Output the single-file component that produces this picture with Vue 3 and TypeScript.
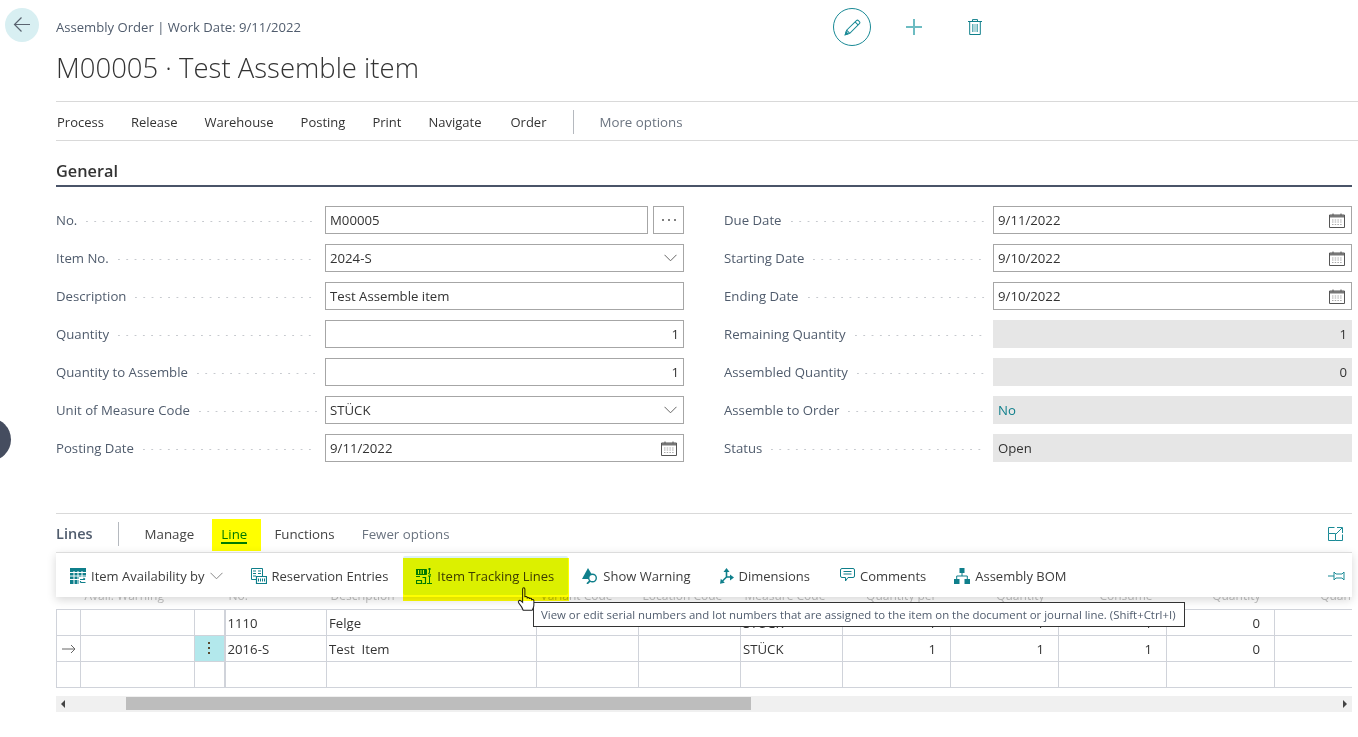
<script setup lang="ts">
type Field = { label: string; value: string; kind?: 'num' | 'select' | 'date' | 'lookup'; readonly?: boolean; link?: boolean }

const leftFields: Field[] = [
  { label: 'No.', value: 'M00005', kind: 'lookup' },
  { label: 'Item No.', value: '2024-S', kind: 'select' },
  { label: 'Description', value: 'Test Assemble item' },
  { label: 'Quantity', value: '1', kind: 'num' },
  { label: 'Quantity to Assemble', value: '1', kind: 'num' },
  { label: 'Unit of Measure Code', value: 'STÜCK', kind: 'select' },
  { label: 'Posting Date', value: '9/11/2022', kind: 'date' },
]

const rightFields: Field[] = [
  { label: 'Due Date', value: '9/11/2022', kind: 'date' },
  { label: 'Starting Date', value: '9/10/2022', kind: 'date' },
  { label: 'Ending Date', value: '9/10/2022', kind: 'date' },
  { label: 'Remaining Quantity', value: '1', kind: 'num', readonly: true },
  { label: 'Assembled Quantity', value: '0', kind: 'num', readonly: true },
  { label: 'Assemble to Order', value: 'No', readonly: true, link: true },
  { label: 'Status', value: 'Open', readonly: true },
]

const menu = ['Process', 'Release', 'Warehouse', 'Posting', 'Print', 'Navigate', 'Order']

const colWidths = [24, 114, 30, 102, 210, 102, 102, 102, 108, 108, 108, 108, 108]
const headers = ['', 'Avail. Warning', '', 'No.', 'Description', 'Variant Code', 'Location Code', 'Measure Code', 'Quantity per', 'Quantity', 'Consume', 'Quantity', 'Quantity']
const rows = [
  ['', '', '', '1110', 'Felge', '', '', 'STÜCK', '1', '1', '1', '0', ''],
  ['>', '', ':', '2016-S', 'Test  Item', '', '', 'STÜCK', '1', '1', '1', '0', ''],
  ['', '', '', '', '', '', '', '', '', '', '', '', ''],
]

function isNumCol(i: number): boolean {
  return i >= 8
}
</script>

<template>
  <div class="page">
    <!-- page header -->
    <header class="head">
      <button class="back" aria-label="Back">
        <svg width="20" height="20" viewBox="0 0 20 20" fill="none" stroke="#5a6470" stroke-width="1.2">
          <path d="M18 9.500H2.500M9.500 2.500l-7 7 7 7" />
        </svg>
      </button>
      <div class="head-text">
        <div class="caption">Assembly Order | Work Date: 9/11/2022</div>
        <h1 class="title">M00005 · Test Assemble item</h1>
      </div>
      <div class="head-actions">
        <span class="edit-btn">
          <svg width="17" height="17" viewBox="0 0 20 20" fill="none" stroke="#1a8a96" stroke-width="1.2">
            <path d="M1.500 18.500l1.600-5.300L14.600 1.900a1.700 1.700 0 0 1 2.400 0l1.100 1.100a1.700 1.700 0 0 1 0 2.400L6.800 16.900z" />
            <path d="M3.100 13.200l3.700 3.700M13 3.500l3.500 3.500" />
            <path d="M1.500 18.500l1-3.200 2.200 2.200z" fill="#1a8a96" />
          </svg>
        </span>
        <svg class="plus" width="16" height="16" viewBox="0 0 16 16" stroke="#6dbcc2" stroke-width="2">
          <path d="M8 0v16M0 8h16" />
        </svg>
        <svg class="trash" width="14" height="16" viewBox="0 0 14 16" fill="none" stroke="#0f7f8b" stroke-width="1">
          <path d="M0 2.500h14M4.500 2.500V.6h5v1.900M1.700 2.500v13h10.600v-13" />
          <path d="M4.500 5v8M6 5v8M8 5v8M9.500 5v8" stroke="#5fafb6" />
        </svg>
      </div>
    </header>

    <nav class="menu">
      <span v-for="m in menu" :key="m" class="menu-item">{{ m }}</span>
      <span class="menu-sep"></span>
      <span class="menu-more">More options</span>
    </nav>

    <section class="general">
      <h2 class="section-title">General</h2>
      <div class="form">
        <div v-for="(col, c) in [leftFields, rightFields]" :key="c" class="form-col">
          <div v-for="f in col" :key="f.label" class="field">
            <label class="label"><span>{{ f.label }}</span><i class="dots"></i></label>
            <div class="control-wrap">
              <div
                class="control"
                :class="{ readonly: f.readonly, num: f.kind === 'num', link: f.link }"
              >
                <span class="value">{{ f.value }}</span>
                <svg v-if="f.kind === 'select'" width="13" height="8" viewBox="0 0 13 8" fill="none" stroke="#666" stroke-width="1">
                  <path d="M.5.800l6 6 6-6" />
                </svg>
                <svg v-if="f.kind === 'date'" class="cal" width="16" height="15" viewBox="0 0 16 15" fill="none">
                  <path d="M.5 2h15v12.500H.5z" stroke="#555" />
                  <path d="M1 2h14v2.500H1z" fill="#777" />
                  <path d="M4 .5v2M12 .5v2" stroke="#555" />
                  <path d="M3 7h10M3 9h10M3 11.500h10" stroke="#aaa" stroke-dasharray="1.500 1.200" />
                </svg>
              </div>
              <div v-if="f.kind === 'lookup'" class="lookup">
                <i></i><i></i><i></i>
              </div>
            </div>
          </div>
        </div>
      </div>
    </section>

    <section class="lines">
      <div class="lines-tabs">
        <span class="lines-title">Lines</span>
        <span class="lines-sep"></span>
        <span class="tab">Manage</span>
        <span class="tab tab-active">Line</span>
        <span class="tab">Functions</span>
        <span class="tab tab-muted">Fewer options</span>
        <svg class="expand" width="15" height="14" viewBox="0 0 15 14" fill="none" stroke="#1a8a96">
          <path d="M.5 6.500h7v7h-7zM7.500 13.500h7v-6M6.500 .5H.5v6M9 .5h5.500v5.500M14 1L8 7" />
        </svg>
      </div>

      <div class="toolbar">
        <button class="tool">
          <svg width="16" height="16" viewBox="0 0 16 16">
            <path d="M0 0h16v13h-3v3H0z" fill="#0f7f8b" />
            <path d="M0 4.500h16M0 8h16M0 11.500h9M4 3v13M8 3v13M12 3v6" stroke="#fff" />
            <path d="M9 9h7v7H9z" fill="#fff" />
            <path d="M10 11.500h5M13.500 10l1.500 1.500M10.500 14.500h5M10.500 14.500V13" fill="none" stroke="#0f7f8b" stroke-width="1.200" />
          </svg>
          <span>Item Availability by</span>
          <svg class="chev" width="13" height="8" viewBox="0 0 13 8" fill="none" stroke="#888">
            <path d="M.5.800l6 6 6-6" />
          </svg>
        </button>
        <button class="tool">
          <svg width="16" height="16" viewBox="0 0 16 16" fill="none" stroke="#0f7f8b">
            <path d="M.5.500h11v11H.5z" />
            <path d="M2 3h3M7 3h3M2 5.500h3M7 5.500h3M2 8h3" />
            <path d="M5.500 8.500h10v7h-10z" fill="#fff" stroke-width="1.200" />
            <path d="M7.500 10.500v3M9.500 10.500v3M11.500 10.500v3M13.500 10.500v3" />
          </svg>
          <span>Reservation Entries</span>
        </button>
        <button class="tool tool-tracking">
          <svg width="16" height="16" viewBox="0 0 16 16" fill="none" stroke="#007a1e">
            <path d="M0 1.500h10.500v5H0z" fill="#007a1e" />
            <path d="M2.500 2v4M5 2v4M7.500 2v4" stroke="#dcf000" />
            <path d="M12 1h3M13.500 0v5M12 5l3 2M12 8h3M13.500 8v7M11 15.500h5" />
            <path d="M0 8.500h4M.5 12.500h5v3H.5zM6.500 9.500h3v6h-3" stroke-width="1.200" />
          </svg>
          <span>Item Tracking Lines</span>
        </button>
        <button class="tool">
          <svg width="16" height="16" viewBox="0 0 16 16">
            <path d="M6 0l6.500 11H0z" fill="#0f7f8b" />
            <circle cx="10.500" cy="10" r="3.800" fill="#fff" stroke="#0f7f8b" stroke-width="1.400" />
            <path d="M8 12.800L5 15.800" stroke="#0f7f8b" stroke-width="1.800" />
          </svg>
          <span>Show Warning</span>
        </button>
        <button class="tool">
          <svg width="14" height="16" viewBox="0 0 14 16" fill="none" stroke="#0f7f8b" stroke-width="1.600">
            <path d="M6.500 9V3M6.500 9l-4 4M6.500 9H11" />
            <path d="M6.500 0L3.500 4h6zM14 9.500l-4-3v6zM0 15.800l.8-5 4 4z" fill="#0f7f8b" stroke="none" />
          </svg>
          <span>Dimensions</span>
        </button>
        <button class="tool">
          <svg width="15" height="15" viewBox="0 0 15 15" fill="none" stroke="#0f7f8b">
            <path d="M2 .5h11a1.500 1.500 0 0 1 1.500 1.500v6A1.500 1.500 0 0 1 13 9.500H8l-2.500 3.500V9.500H2A1.500 1.500 0 0 1 .5 8V2A1.500 1.500 0 0 1 2 .5z" />
            <path d="M3.500 3.500h8M3.500 6h8" />
          </svg>
          <span>Comments</span>
        </button>
        <button class="tool">
          <svg width="16" height="16" viewBox="0 0 16 16" fill="#0f7f8b">
            <path d="M5.500 0h5v5h-5zM0 11h5.500v5H0zM10.500 11H16v5h-5.500z" />
            <path d="M8 5v3M2.700 11V8h10.600v3" fill="none" stroke="#0f7f8b" />
          </svg>
          <span>Assembly BOM</span>
        </button>
        <svg class="pin" width="17" height="12" viewBox="0 0 17 12" fill="none" stroke="#1a8a96">
          <path d="M0 6h6M6 2v8l2-2h6l2 2V2l-2 2H8z" />
        </svg>
      </div>

      <div class="grid-wrap">
        <table class="grid">
          <colgroup>
            <col v-for="(w, i) in colWidths" :key="i" :style="{ width: w + 'px' }" />
          </colgroup>
          <thead>
            <tr>
              <th v-for="(h, i) in headers" :key="i" :class="{ right: isNumCol(i) }">{{ h }}</th>
            </tr>
          </thead>
          <tbody>
            <tr v-for="(row, r) in rows" :key="r">
              <td
                v-for="(cell, i) in row"
                :key="i"
                :class="{ right: isNumCol(i), 'kebab-cell': cell === ':', thick: i === 3 }"
              >
                <svg v-if="cell === '>'" class="row-arrow" width="14" height="10" viewBox="0 0 14 10" fill="none" stroke="#666">
                  <path d="M0 5h13M9 1l4 4-4 4" />
                </svg>
                <span v-else-if="cell === ':'" class="kebab"><i></i><i></i><i></i></span>
                <template v-else>{{ cell }}</template>
              </td>
            </tr>
          </tbody>
        </table>
      </div>

      <div class="scrollbar">
        <span class="sb-arrow left"></span>
        <span class="sb-thumb"></span>
        <span class="sb-arrow right"></span>
      </div>

      <!-- hover state and marker highlights sitting on top of the page -->
      <div class="tooltip">View or edit serial numbers and lot numbers that are assigned to the item on the document or journal line. (Shift+Ctrl+I)</div>
      <svg class="hand" width="18" height="24" viewBox="0 0 16 21" fill="#fff" stroke="#222" stroke-width="0.900">
        <path d="M5 1.500c0-1.300 2-1.300 2 0V9c0-1 2-1 2 0v1c0-1 2-1 2 0v.5c0-1 2-1 2 0v1c0-.8 2-.8 2 .3V16c0 2-1 3-1.500 4.500h-8C5 19 3.500 16.500 1.500 14c-1-1.500.5-3 2-1.800L5 13.500z" />
      </svg>
      <span class="mark mark-line"></span>
      <span class="mark mark-tracking"></span>
    </section>

    <span class="side-handle"></span>
  </div>
</template>

<style scoped>
.page {
  position: relative;
  width: 1358px;
  height: 737px;
  overflow: hidden;
  background: #fff;
  font-family: 'Open Sans', 'Noto Sans', sans-serif;
  font-size: 13.2px;
  color: #333;
}

.head {
  display: flex;
  height: 101px;
  padding-left: 5px;
  box-sizing: border-box;
}

.back {
  width: 34px;
  height: 34px;
  margin-top: 8px;
  border: 0;
  padding: 0;
  border-radius: 50%;
  background: #d8eff2;
  display: flex;
  align-items: center;
  justify-content: center;
}

.head-text {
  width: 777px;
  margin-left: 17px;
}

.caption {
  margin-top: 18px;
  line-height: 18px;
  font-size: 13.1px;
  color: #505c6d;
}

.title {
  margin: 9px 0 0;
  font-size: 27.5px;
  line-height: 46px;
  font-weight: 300;
  color: #333;
}

.head-actions {
  display: flex;
  align-items: center;
  height: 38px;
  margin-top: 8px;
}

.edit-btn {
  width: 36px;
  height: 36px;
  border: 1px solid #1a8a96;
  border-radius: 50%;
  display: flex;
  align-items: center;
  justify-content: center;
}

.plus {
  margin-left: 35px;
}

.trash {
  margin-left: 46px;
}

.menu {
  display: flex;
  align-items: center;
  gap: 27px;
  height: 36px;
  margin-left: 56px;
  padding: 2px 0 0 1px;
  font-size: 13px;
  border-top: 1px solid #d9d9d9;
  border-bottom: 1px solid #d9d9d9;
}

.menu-item:nth-child(6) {
  margin-right: 2px;
}

.menu-sep {
  width: 1px;
  height: 24px;
  margin-right: -2px;
  background: #b5b9bf;
}

.menu-more {
  font-size: 13.3px;
  color: #6b7480;
}

.general {
  margin-left: 56px;
  margin-right: 6px;
}

.section-title {
  margin: 20px 0 0;
  height: 24px;
  line-height: 20px;
  font-size: 16.3px;
  font-weight: 600;
  color: #333;
  border-bottom: 2px solid #4a5468;
}

.form {
  display: grid;
  grid-template-columns: 628px 628px;
  column-gap: 40px;
  margin-top: 19px;
}

.field {
  display: grid;
  grid-template-columns: 269px 1fr;
  height: 38px;
  align-items: start;
}

.label {
  display: flex;
  align-items: center;
  height: 28px;
  padding-right: 8px;
  color: #505c6d;
}

.dots {
  flex: 1;
  height: 1px;
  margin-left: 9px;
  margin-top: 2px;
  background: linear-gradient(90deg, #c6c9ce 1.5px, transparent 1.500px) 0 0 / 8.300px 1px repeat-x;
}

.control-wrap {
  display: flex;
  gap: 5px;
}

.control {
  flex: 1;
  min-width: 0;
  height: 28px;
  box-sizing: border-box;
  border: 1px solid #a6a6a6;
  display: flex;
  align-items: center;
  justify-content: space-between;
  padding: 0 6px 0 4px;
  color: #333;
}

.control.num {
  justify-content: flex-end;
  padding-right: 4px;
}

.control.readonly {
  border-color: #e6e6e6;
  background: #e6e6e6;
}

.control.link {
  color: #0f7f8b;
}

.lookup {
  width: 31px;
  height: 28px;
  box-sizing: border-box;
  border: 1px solid #a6a6a6;
  display: flex;
  align-items: center;
  justify-content: center;
  gap: 4px;
}

.lookup i {
  width: 2px;
  height: 2px;
  border-radius: 50%;
  background: #555;
}

.lines {
  position: absolute;
  left: 56px;
  top: 513px;
  width: 1296px;
  border-top: 1px solid #d9d9d9;
}

.lines-tabs {
  display: flex;
  align-items: center;
  height: 38px;
  box-sizing: border-box;
  padding-top: 1px;
  position: relative;
  font-size: 13.3px;
}

.lines-title {
  font-size: 14.5px;
  font-weight: 600;
  color: #505c6d;
}

.lines-sep {
  width: 1px;
  height: 24px;
  margin: 0 26px 0 25px;
  background: #b5b9bf;
}

.tab {
  margin-right: 27.2px;
  color: #444;
  position: relative;
}

.tab-active {
  color: #007a1e;
  z-index: 2;
}

.tab-active::after {
  content: '';
  position: absolute;
  left: 0;
  right: 0;
  bottom: -1px;
  height: 2px;
  background: #007a1e;
}

.tab-muted {
  color: #6b7480;
}

.expand {
  margin-left: auto;
  margin-right: 9px;
}

.toolbar {
  position: relative;
  z-index: 2;
  display: flex;
  align-items: center;
  height: 45px;
  box-sizing: border-box;
  padding: 1px 0 0 14px;
  background: #fff;
  border-top: 1px solid #dcdcdc;
  box-shadow: 0 3px 9px rgba(0, 0, 0, 0.16);
  font-size: 13px;
}

.tool {
  display: flex;
  align-items: center;
  gap: 5px;
  height: 36px;
  margin-right: 28px;
  padding: 0;
  border: 0;
  background: none;
  font: inherit;
  color: #3c3c3c;
  white-space: nowrap;
}

.tool:nth-child(4) {
  margin-right: 29px;
}

.tool:nth-child(5) {
  margin-right: 30px;
}

.tool-tracking {
  position: relative;
}

/* hover fill of the button, the marker turns it lime */
.tool-tracking::before {
  content: '';
  position: absolute;
  left: -13px;
  right: -14px;
  top: -2px;
  bottom: -1px;
  border-radius: 2px;
  background: #dcf0f5;
}

.tool-tracking > * {
  position: relative;
}

.pin {
  margin-left: auto;
  margin-right: 7px;
}

.grid-wrap {
  margin-top: -12px;
  overflow: hidden;
}

.grid {
  width: 1326px;
  table-layout: fixed;
  border-collapse: collapse;
}

.grid th {
  height: 24px;
  padding: 0 4px 5px;
  box-sizing: border-box;
  font-weight: 400;
  font-size: 12px;
  color: #c2c2c2;
  text-align: left;
  vertical-align: bottom;
  border-bottom: 1px solid #d0d3da;
  white-space: nowrap;
  overflow: hidden;
}

.grid td {
  height: 26px;
  padding: 2px 2px 0;
  box-sizing: border-box;
  border: 1px solid #d0d3da;
  white-space: pre;
  overflow: hidden;
}

.grid td:last-child {
  border-right: 0;
}

.grid td.thick {
  border-left-width: 2px;
}

.grid .right {
  text-align: right;
}

.grid th.right,
.grid td.right {
  padding-right: 14px;
}

.grid td.kebab-cell {
  padding: 0;
  background: #b3e8ec;
}

.kebab {
  display: flex;
  flex-direction: column;
  align-items: center;
  gap: 3px;
}

.kebab i {
  width: 2px;
  height: 2px;
  background: #5a4a30;
}

.row-arrow {
  display: block;
  margin-left: 3px;
}

.scrollbar {
  display: flex;
  align-items: center;
  height: 16px;
  margin-top: 8px;
  background: #f0f0f0;
}

.sb-thumb {
  width: 625px;
  height: 13px;
  margin-left: 61px;
  background: #bdbdbd;
}

.sb-arrow {
  width: 0;
  height: 0;
  border-top: 4px solid transparent;
  border-bottom: 4px solid transparent;
}

.sb-arrow.left {
  margin-left: 5px;
  border-right: 4px solid #444;
}

.sb-arrow.right {
  margin-left: auto;
  margin-right: 5px;
  border-left: 4px solid #444;
}

.mark {
  position: absolute;
  background: #ffff00;
  mix-blend-mode: multiply;
  z-index: 5;
}

.mark-line {
  left: 156px;
  top: 5px;
  width: 49px;
  height: 32px;
}

.mark-tracking {
  left: 347px;
  top: 44px;
  width: 166px;
  height: 43px;
}

.tooltip {
  position: absolute;
  left: 477px;
  top: 88px;
  width: 652px;
  height: 25px;
  box-sizing: border-box;
  z-index: 3;
  padding-left: 7px;
  background: #fff;
  border: 1px solid #333;
  font-size: 11.4px;
  line-height: 23px;
  color: #505c6d;
  white-space: nowrap;
}

.hand {
  position: absolute;
  left: 461px;
  top: 73px;
  z-index: 4;
}

.side-handle {
  position: absolute;
  left: -32px;
  top: 418px;
  width: 43px;
  height: 43px;
  border-radius: 50%;
  background: #454d5f;
}
</style>
